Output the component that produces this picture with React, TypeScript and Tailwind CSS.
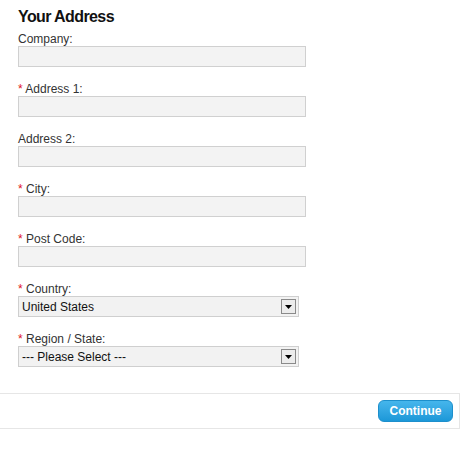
import React from "react";

const fields = [
  { label: "Company:", required: false },
  { label: "Address 1:", required: true },
  { label: "Address 2:", required: false },
  { label: "City:", required: true },
  { label: "Post Code:", required: true },
];

function Label({ text, required }: { text: string; required: boolean }) {
  return (
    <div className="h-[14px] text-[12px] leading-[14px] text-[#333]">
      {required && <span className="text-[#e0161d]">* </span>}
      {text}
    </div>
  );
}

function Select({ value }: { value: string }) {
  return (
    <div className="flex h-[21px] w-[281px] items-center justify-between border border-[#cfcfcf] bg-[#f2f2f2] pl-[3px] pr-[2px]">
      <span className="text-[12px] leading-[14px] text-[#111]">{value}</span>
      <span className="flex h-[15px] w-[15px] items-center justify-center border border-[#8a8a8a] bg-[#ececec]">
        <svg width="7" height="4" viewBox="0 0 7 4">
          <path d="M0 0h7L3.5 4z" fill="#000" />
        </svg>
      </span>
    </div>
  );
}

export default function App() {
  return (
    <div className="min-h-[449px] w-[474px] bg-white pt-[7px] font-['Liberation_Sans',Arial,sans-serif]">
      <div className="pl-[18px]">
        <h2 className="text-[16px] font-bold leading-[20px] tracking-[-0.6px] text-[#111]">Your Address</h2>
        <div className="mt-[5px] flex flex-col gap-[15px]">
          {fields.map((f) => (
            <div key={f.label}>
              <Label text={f.label} required={f.required} />
              <div className="h-[21px] w-[288px] border border-[#d0d0d0] bg-[#f3f3f3]" />
            </div>
          ))}
          <div>
            <Label text="Country:" required />
            <Select value="United States" />
          </div>
          <div>
            <Label text="Region / State:" required />
            <Select value="--- Please Select ---" />
          </div>
        </div>
      </div>
      <div className="mt-[26px] flex h-[36px] w-[460px] items-center justify-end border-y border-r border-[#e6e6e6] pr-[6px]">
        <button className="h-[22px] w-[75px] rounded-[6px] border border-[#1d8fcc] bg-gradient-to-b from-[#45b6ec] to-[#1b98d8] text-[12px] font-bold text-white">
          Continue
        </button>
      </div>
    </div>
  );
}
